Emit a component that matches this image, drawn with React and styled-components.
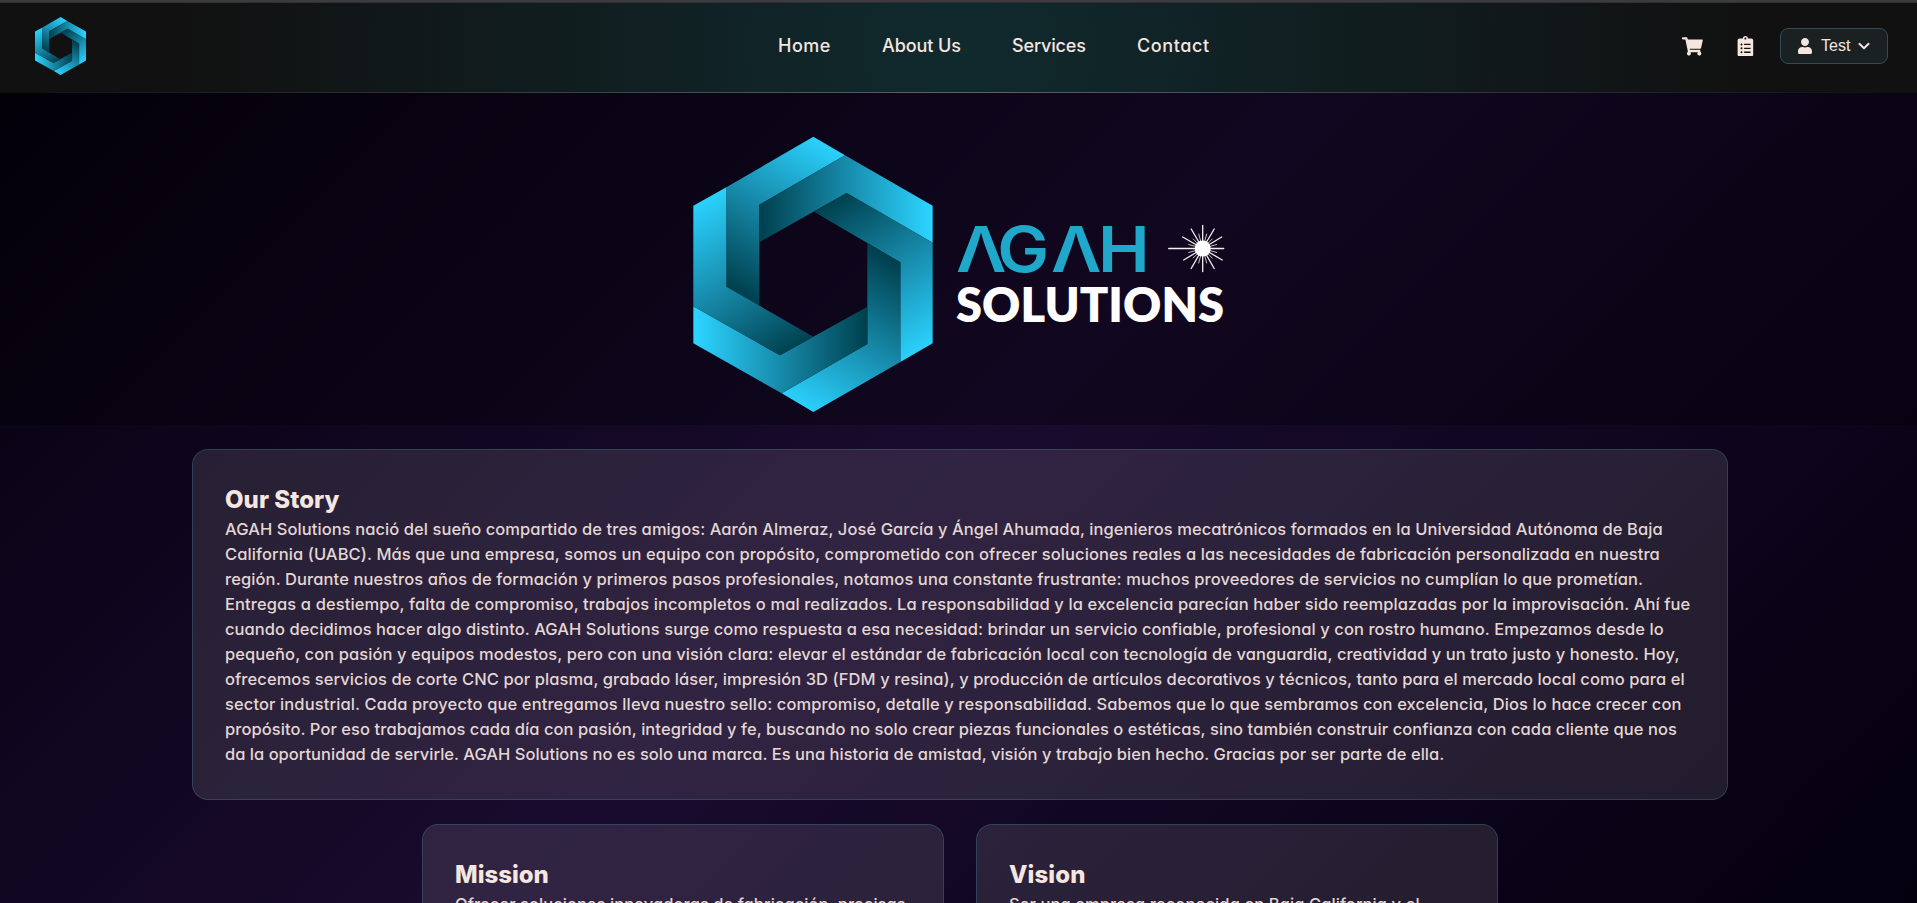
import React from 'react';
import styled, { createGlobalStyle } from 'styled-components';
import { FaShoppingCart, FaClipboardList, FaUser } from 'react-icons/fa';

const GlobalStyle = createGlobalStyle`
  *, *::before, *::after { box-sizing: border-box; }
  html, body { margin: 0; padding: 0; height: 100%; overflow: hidden; background: #05000f; }
  #root { height: 100%; }
`;

const Page = styled.div`
  width: 1920px;
  height: 903px;
  overflow: hidden;
  display: flex;
  flex-direction: column;
  color: #f5e6e0;
  font-family: Inter, 'Liberation Sans', sans-serif;
  font-weight: 500;
  font-feature-settings: 'cv11';
  background: linear-gradient(135deg, #04000c 0%, #190b2e 50%, #04000e 100%);
`;

const TopStrip = styled.div`
  flex: none;
  height: 3px;
  background: #3c3c40;
  border-bottom: 1px solid #303033;
`;

const Header = styled.header`
  flex: none;
  display: flex;
  align-items: center;
  height: 89px;
  padding: 0 32px 3px 35px;
  background: radial-gradient(circle at center, #102a2e 0, #111111 780px);
`;

const HeaderRule = styled.div`
  flex: none;
  height: 1px;
  background: linear-gradient(90deg, #111 2%, #56666a 50%, #111 98%);
`;

const BrandLink = styled.a`
  display: flex;
  svg { width: 51px; height: 58px; }
`;

const Nav = styled.nav`
  display: flex;
  gap: 52px;
  margin-left: 692px;
`;

const NavLink = styled.a`
  color: #f5e6e0;
  font-size: 18px;
  line-height: 26px;
  letter-spacing: ${(p) => p.$tracking}px;
  width: ${(p) => p.$width}px;
  white-space: nowrap;
`;

const Actions = styled.div`
  display: flex;
  align-items: center;
  margin-left: auto;
`;

const IconButton = styled.button`
  display: flex;
  padding: 0;
  border: 0;
  background: none;
  color: #f5e6e0;
  font-size: 20.8px;
  margin-right: ${(p) => p.$after}px;
`;

const UserButton = styled.button`
  display: flex;
  align-items: center;
  gap: 8px;
  width: 108px;
  height: 36px;
  padding: 0 16px;
  border: 1px solid #344b55;
  border-radius: 8px;
  background: #1b2123;
  color: #f5e6e0;
  font: 400 16px 'Liberation Sans', Arial, sans-serif;
`;

const Glyph = styled.span`
  display: flex;
  flex: none;
  font-size: ${(p) => p.$size}px;
`;

const Hero = styled.section`
  flex: none;
  display: flex;
  justify-content: center;
  height: 332px;
  padding-top: 37px;
  background: rgba(0, 0, 0, 0.3);
`;

const WordTop = styled.text`
  font-family: Inter, sans-serif;
  font-weight: 600;
  font-size: 63px;
  fill: #1fa8c9;
`;

const WordBottom = styled.text`
  font-family: Lato, sans-serif;
  font-weight: 800;
  font-size: 47px;
  fill: #ffffff;
`;

const Content = styled.main`
  display: flex;
  flex-direction: column;
  align-items: center;
  gap: 24px;
  padding-top: 24px;
`;

const Row = styled.div`
  display: flex;
  gap: 32px;
`;

const Card = styled.article`
  width: ${(p) => p.$width}px;
  height: ${(p) => p.$height}px;
  padding: 32px;
  border: 1px solid rgba(90, 140, 155, 0.45);
  border-radius: 16px;
  background: rgba(226, 224, 224, 0.12);
  background-clip: padding-box;
`;

const CardTitle = styled.h2`
  margin: 0;
  font-size: 24px;
  font-weight: 800;
  line-height: 35px;
  letter-spacing: ${(p) => p.$tracking}px;
`;

const Copy = styled.p`
  margin: 0;
  font-size: 16.5px;
  line-height: 25px;
  color: #e3d6d3;
`;

const Line = styled.span`
  display: block;
  white-space: nowrap;
  letter-spacing: ${(p) => p.$tracking}px;
`;

const story = [
  [0.073, 'AGAH Solutions nació del sueño compartido de tres amigos: Aarón Almeraz, José García y Ángel Ahumada, ingenieros mecatrónicos formados en la Universidad Autónoma de Baja'],
  [0.094, 'California (UABC). Más que una empresa, somos un equipo con propósito, comprometido con ofrecer soluciones reales a las necesidades de fabricación personalizada en nuestra'],
  [0.102, 'región. Durante nuestros años de formación y primeros pasos profesionales, notamos una constante frustrante: muchos proveedores de servicios no cumplían lo que prometían.'],
  [0.098, 'Entregas a destiempo, falta de compromiso, trabajos incompletos o mal realizados. La responsabilidad y la excelencia parecían haber sido reemplazadas por la improvisación. Ahí fue'],
  [0.066, 'cuando decidimos hacer algo distinto. AGAH Solutions surge como respuesta a esa necesidad: brindar un servicio confiable, profesional y con rostro humano. Empezamos desde lo'],
  [0.077, 'pequeño, con pasión y equipos modestos, pero con una visión clara: elevar el estándar de fabricación local con tecnología de vanguardia, creatividad y un trato justo y honesto. Hoy,'],
  [0.074, 'ofrecemos servicios de corte CNC por plasma, grabado láser, impresión 3D (FDM y resina), y producción de artículos decorativos y técnicos, tanto para el mercado local como para el'],
  [0.109, 'sector industrial. Cada proyecto que entregamos lleva nuestro sello: compromiso, detalle y responsabilidad. Sabemos que lo que sembramos con excelencia, Dios lo hace crecer con'],
  [0.068, 'propósito. Por eso trabajamos cada día con pasión, integridad y fe, buscando no solo crear piezas funcionales o estéticas, sino también construir confianza con cada cliente que nos'],
  [0.014, 'da la oportunidad de servirle. AGAH Solutions no es solo una marca. Es una historia de amistad, visión y trabajo bien hecho. Gracias por ser parte de ella.'],
];

const links = [
  ['Home', 52, 0.5],
  ['About Us', 78, -0.1],
  ['Services', 73, -0.15],
  ['Contact', 73, 0.6],
];

const rays = [
  [0, -23], [0, 23], [21, 0], [-34, 0],
  [11.5, -19.5], [19, -11.5], [11.5, 20], [19.5, 11.5],
  [-11.5, -19.5], [-20, -11.5], [-11.5, 20], [-19, 11.5],
];
const shortRays = [
  [4, -14.5], [9.5, -9.5], [14, -4], [14, 4], [9.5, 9.5], [4, 14.5],
  [-4, 14.5], [-9.5, 9.5], [-14, 4], [-14, -4], [-9.5, -9.5], [-4, -14.5],
];

function HexMark({ id }) {
  const g = (n) => `url(#${id}${n})`;
  const ramp = (n, x1, y1, x2, y2) => (
    <linearGradient id={`${id}${n}`} gradientUnits="userSpaceOnUse" x1={x1} y1={y1} x2={x2} y2={y2}>
      <stop offset="0" stopColor="#2bd3ff" />
      <stop offset="0.5" stopColor="#178aaa" />
      <stop offset="1" stopColor="#00414f" />
    </linearGradient>
  );
  return (
    <g>
      <defs>
        {ramp('a', 480, 100, 220, 550)}
        {ramp('b', 780, 300, 275, 300)}
        {ramp('c', 770, 720, 490, 270)}
        {ramp('d', 380, 890, 640, 440)}
        {ramp('e', 80, 690, 585, 690)}
        {ramp('f', 90, 270, 370, 720)}
      </defs>
      <polygon fill={g('a')} points="430,80 525,136 268,284 268,587 169,530 169,232" />
      <polygon fill={g('b')} points="525,136 788,287 788,398 530,249 268,397 268,284" />
      <polygon fill={g('c')} points="788,398 788,700 691,756 691,457 432,305 530,249" />
      <polygon fill={g('d')} points="691,756 430,906 335,850 592,702 592,400 691,457" />
      <polygon fill={g('e')} points="335,850 70,700 70,589 330,736 592,590 592,702" />
      <polygon fill={g('f')} points="70,589 70,287 169,232 169,530 430,680 330,736" />
    </g>
  );
}

function HeroLogo() {
  return (
    <svg width="540" height="290" viewBox="690 130 540 290">
      <g transform="translate(670 110) scale(0.33333)">
        <HexMark id="hero" />
      </g>
      <WordTop
        transform="translate(956 272) scale(1.1 1)"
        x="0 37.6 86.3 129.1"
        aria-label="AGAH"
      >
        ΛGΛH
      </WordTop>
      <WordBottom x="956" y="321.5" textLength="268">SOLUTIONS</WordBottom>
      <g transform="translate(1202.7 248.5)" stroke="#f6efee" strokeLinecap="round">
        {rays.map(([x, y]) => <line key={`${x},${y}`} x1="0" y1="0" x2={x} y2={y} strokeWidth="1.3" />)}
        {shortRays.map(([x, y]) => <line key={`${x},${y}`} x1="0" y1="0" x2={x} y2={y} strokeWidth="0.8" />)}
        <circle r="8" fill="#fff" stroke="none" />
      </g>
    </svg>
  );
}

function Chevron() {
  return (
    <svg width="12" height="12" viewBox="0 0 12 12" fill="none" stroke="currentColor" strokeWidth="1.9" strokeLinecap="round" strokeLinejoin="round">
      <polyline points="1.4,3.8 6,8.3 10.6,3.8" />
    </svg>
  );
}

export default function App() {
  return (
    <Page>
      <GlobalStyle />
      <TopStrip />
      <Header>
        <BrandLink>
          <svg viewBox="70 80 718 826" preserveAspectRatio="none"><HexMark id="nav" /></svg>
        </BrandLink>
        <Nav>
          {links.map(([label, width, tracking]) => (
            <NavLink key={label} $width={width} $tracking={tracking}>{label}</NavLink>
          ))}
        </Nav>
        <Actions>
          <IconButton $after={32}><FaShoppingCart /></IconButton>
          <IconButton $after={24}><FaClipboardList /></IconButton>
          <UserButton>
            <Glyph $size={16}><FaUser /></Glyph>
            Test
            <Glyph $size={12}><Chevron /></Glyph>
          </UserButton>
        </Actions>
      </Header>
      <HeaderRule />
      <Hero><HeroLogo /></Hero>
      <Content>
        <Card $width={1536} $height={351}>
          <CardTitle $tracking={0.05}>Our Story</CardTitle>
          <Copy>
            {story.map(([tracking, text]) => <Line key={text} $tracking={tracking}>{text} </Line>)}
          </Copy>
        </Card>
        <Row>
          <Card $width={522} $height={300}>
            <CardTitle $tracking={0}>Mission</CardTitle>
            <Copy><Line $tracking={0.044}>Ofrecer soluciones innovadoras de fabricación, precisas</Line></Copy>
          </Card>
          <Card $width={522} $height={300}>
            <CardTitle $tracking={0.1}>Vision</CardTitle>
            <Copy><Line $tracking={0.09}>Ser una empresa reconocida en Baja California y el</Line></Copy>
          </Card>
        </Row>
      </Content>
    </Page>
  );
}
